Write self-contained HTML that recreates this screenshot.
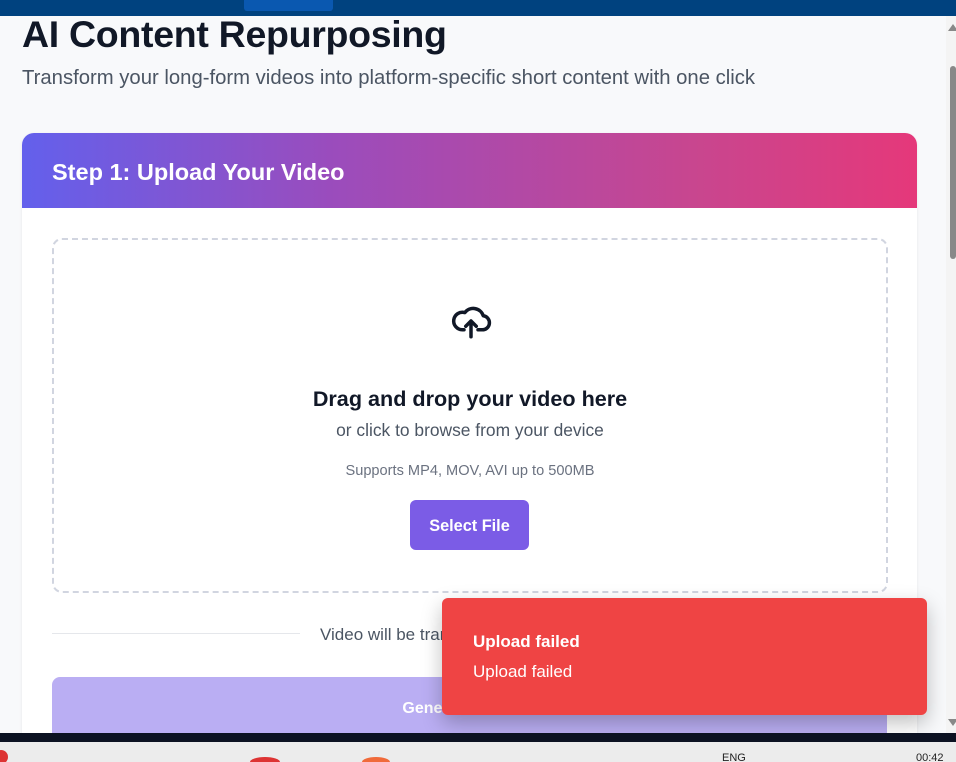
<!DOCTYPE html>
<html><head><meta charset="utf-8"><style>
html,body{margin:0;padding:0;width:956px;height:762px;overflow:hidden;background:#f8f9fb;font-family:"Liberation Sans","DejaVu Sans",sans-serif;position:relative}
.top{position:absolute;left:0;top:0;width:956px;height:16px;background:#00427f}
.tab{position:absolute;left:244px;top:0;width:89px;height:11px;background:#0a58b0;border-radius:0 0 3px 3px}
h1{position:absolute;left:22px;top:13px;margin:0;font-size:37.5px;font-weight:bold;color:#111827;letter-spacing:-0.3px}
.sub{position:absolute;left:22px;top:67px;font-size:20.3px;color:#4b5563}
.card{position:absolute;left:22px;top:133px;width:895px;height:620px;background:#fff;border-radius:12px 12px 0 0;box-shadow:0 1px 3px rgba(0,0,0,.08)}
.hdr{height:75px;border-radius:12px 12px 0 0;background:linear-gradient(90deg,#6360ec,#9b4cbc 35%,#c8468f 75%,#e5387a);color:#fff;font-size:23.5px;font-weight:bold;line-height:78px;padding-left:30px}
.drop{position:absolute;left:30px;top:105px;width:832px;height:351px;border:2px dashed #d1d5e0;border-radius:10px;text-align:center}
.t1{position:absolute;left:0;right:0;top:146px;font-size:21.6px;font-weight:bold;color:#111827}
.t2{position:absolute;left:0;right:0;top:180px;font-size:17.4px;color:#4b5563}
.t3{position:absolute;left:0;right:0;top:223px;font-size:14.6px;color:#6b7280}
.btn{position:absolute;left:356px;top:260px;width:119px;height:50px;background:#7b5ce6;color:#fff;border-radius:6px;font-size:16.3px;font-weight:bold;line-height:52px}
.line{position:absolute;left:30px;top:500px;width:248px;height:1px;background:#e5e7eb}
.vt{position:absolute;left:298px;top:492px;font-size:17px;color:#4b5563}
.gen{position:absolute;left:30px;top:544px;width:835px;height:70px;background:#baaef3;border-radius:8px;color:#fff;font-weight:bold;font-size:16px;text-align:center;line-height:64px}
.toast{position:absolute;left:442px;top:598px;width:485px;height:117px;background:#ef4444;border-radius:6px;color:#fff;box-shadow:0 8px 20px rgba(0,0,0,.25)}
.toast b{position:absolute;left:31px;top:34px;font-size:17px}
.toast span{position:absolute;left:31px;top:64px;font-size:17px}
.sb{position:absolute;left:946px;top:16px;width:10px;height:718px;background:#f4f4f4}
.thumb{position:absolute;left:950px;top:66px;width:6px;height:193px;background:#888;border-radius:3px}
.arr{position:absolute;left:948px;top:24px;width:0;height:0;border-left:5px solid transparent;border-right:5px solid transparent;border-bottom:7px solid #888}
.arr2{position:absolute;left:948px;top:719px;width:0;height:0;border-left:5px solid transparent;border-right:5px solid transparent;border-top:7px solid #888}
.taskdark{position:absolute;left:0;top:733px;width:956px;height:9px;background:#0c1222}
.task{position:absolute;left:0;top:742px;width:956px;height:20px;background:#ececec;font-size:11px;color:#222}
</style></head><body>
<div class="top"><div class="tab"></div></div>
<h1>AI Content Repurposing</h1>
<div class="sub">Transform your long-form videos into platform-specific short content with one click</div>
<div class="card">
<div class="hdr">Step 1: Upload Your Video</div>
<div class="drop">
<svg style="position:absolute;left:395px;top:60px" width="44" height="42" viewBox="0 0 24 24" fill="none" stroke="#111827" stroke-width="2" stroke-linecap="round" stroke-linejoin="round"><path d="M8 17H7a5 5 0 1 1 1.5-9.8A6 6 0 0 1 19 9a4 4 0 0 1-1 8h-2"/><path d="M12 12v9M9 15l3-3 3 3"/></svg>
<div class="t1">Drag and drop your video here</div>
<div class="t2">or click to browse from your device</div>
<div class="t3">Supports MP4, MOV, AVI up to 500MB</div>
<div class="btn">Select File</div>
</div>
<div class="line"></div>
<div class="vt">Video will be transcribed</div>
<div class="gen">Generate Content</div>
</div>
<div class="toast"><b>Upload failed</b><span>Upload failed</span></div>
<div class="sb"></div><div class="thumb"></div><div class="arr"></div><div class="arr2"></div>
<div class="taskdark"></div>
<div class="task"><span style="position:absolute;left:722px;top:10px">ENG</span><span style="position:absolute;left:916px;top:10px">00:42</span>
<div style="position:absolute;left:-6px;top:8px;width:14px;height:14px;border-radius:50%;background:#d33"></div>
<div style="position:absolute;left:250px;top:15px;width:30px;height:10px;border-radius:50% 50% 0 0;background:#d33"></div>
<div style="position:absolute;left:362px;top:15px;width:28px;height:10px;border-radius:50% 50% 0 0;background:#f06a3a"></div>
</div>
</body></html>
